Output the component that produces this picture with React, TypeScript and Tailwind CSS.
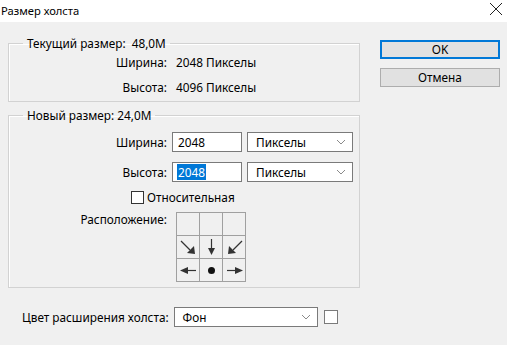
import React from "react";

function Chevron() {
  return (
    <svg width="10" height="6" viewBox="0 0 10 6" className="text-[#8a8a8a]">
      <path d="M1 1 L5 5 L9 1" fill="none" stroke="currentColor" strokeWidth="1" />
    </svg>
  );
}

function Select({ value, width }: { value: string; width: string }) {
  return (
    <div
      className={`${width} h-[20px] bg-white border border-[#7a7a7a] flex items-center justify-between pl-[8px] pr-[6px]`}
    >
      <span>{value}</span>
      <Chevron />
    </div>
  );
}

type Dir = "se" | "s" | "sw" | "w" | "e" | "dot" | "none";

function Cell({ dir }: { dir: Dir }) {
  const ink = "#333333";
  let content: React.ReactNode = null;
  if (dir === "dot") content = <circle cx="11.5" cy="11.5" r="3.5" fill="#111" />;
  if (dir === "s")
    content = (
      <>
        <line x1="11.5" y1="3" x2="11.5" y2="13" stroke={ink} strokeWidth="1.2" />
        <path d="M8 12 L15 12 L11.5 19 Z" fill={ink} />
      </>
    );
  if (dir === "se")
    content = (
      <>
        <line x1="4" y1="5" x2="13" y2="14" stroke={ink} strokeWidth="1.2" />
        <path d="M10 17 L18 18 L17 10 Z" fill={ink} />
      </>
    );
  if (dir === "sw")
    content = (
      <>
        <line x1="19" y1="5" x2="10" y2="14" stroke={ink} strokeWidth="1.2" />
        <path d="M13 17 L5 18 L6 10 Z" fill={ink} />
      </>
    );
  if (dir === "w")
    content = (
      <>
        <line x1="10" y1="11.5" x2="19" y2="11.5" stroke={ink} strokeWidth="1.2" />
        <path d="M11 8 L11 15 L3 11.5 Z" fill={ink} />
      </>
    );
  if (dir === "e")
    content = (
      <>
        <line x1="4" y1="11.5" x2="13" y2="11.5" stroke={ink} strokeWidth="1.2" />
        <path d="M12 8 L12 15 L20 11.5 Z" fill={ink} />
      </>
    );
  return (
    <div className="w-[23px] h-[23px] border-r border-b border-[#a0a0a0]">
      {content && (
        <svg width="23" height="23" viewBox="0 0 23 23">
          {content}
        </svg>
      )}
    </div>
  );
}

export default function App() {
  const anchors: Dir[] = ["none", "none", "none", "se", "s", "sw", "w", "dot", "e"];

  return (
    <div className="w-[507px] h-[345px] bg-[#f0f0f0] text-[11.8px] leading-[16px] text-black font-['Noto_Sans',sans-serif] overflow-hidden">
      {/* Title bar */}
      <div className="h-[22px] bg-white flex items-center justify-between pl-[1px] pr-[4px]">
        <span className="text-[11.2px]">Размер холста</span>
        <svg width="14" height="14" viewBox="0 0 14 14" className="mb-[4px]">
          <path d="M1 1 L13 13 M13 1 L1 13" stroke="#222" strokeWidth="1" />
        </svg>
      </div>

      <div className="flex pt-[13px] pl-[8px]">
        {/* Left column */}
        <div className="w-[352px] flex flex-col">
          <fieldset className="border border-[#d2d2d2] shadow-[inset_1px_1px_0_#fff] pb-[4px]">
            <legend className="ml-[14px] px-[4px] whitespace-pre">Текущий размер:  48,0M</legend>
            <div className="flex items-center h-[20px] mt-[1px]">
              <span className="w-[158px] text-right">Ширина:</span>
              <span className="ml-[9px]">2048 Пикселы</span>
            </div>
            <div className="flex items-center h-[20px] mt-[5px]">
              <span className="w-[158px] text-right">Высота:</span>
              <span className="ml-[9px]">4096 Пикселы</span>
            </div>
          </fieldset>

          <fieldset className="mt-[5px] border border-[#d2d2d2] shadow-[inset_1px_1px_0_#fff] pb-[5px]">
            <legend className="ml-[14px] px-[4px]">Новый размер: 24,0M</legend>
            <div className="flex items-center mt-[9px]">
              <span className="w-[158px] text-right">Ширина:</span>
              <div className="ml-[5px] w-[70px] h-[20px] bg-white border border-[#7a7a7a] flex items-center pl-[5px]">
                2048
              </div>
              <div className="ml-[5px]">
                <Select value="Пикселы" width="w-[106px]" />
              </div>
            </div>
            <div className="flex items-center mt-[10px]">
              <span className="w-[158px] text-right">Высота:</span>
              <div className="ml-[5px] w-[70px] h-[20px] bg-white border border-[#7a7a7a] flex items-center pl-[4px]">
                <span className="bg-[#0078d7] text-white px-[1px]">2048</span>
              </div>
              <div className="ml-[5px]">
                <Select value="Пикселы" width="w-[106px]" />
              </div>
            </div>
            <div className="flex items-center mt-[7px] h-[16px] pl-[122px]">
              <div className="w-[13px] h-[13px] bg-white border border-[#333]" />
              <span className="ml-[3px]">Относительная</span>
            </div>
            <div className="flex items-start mt-[7px]">
              <span className="w-[158px] text-right mt-[-1px]">Расположение:</span>
              <div className="ml-[9px] border-l border-t border-[#a0a0a0] grid grid-cols-3">
                {anchors.map((d, i) => (
                  <Cell key={i} dir={d} />
                ))}
              </div>
            </div>
          </fieldset>

          <div className="flex items-center mt-[19px] pl-[14px]">
            <span>Цвет расширения холста:</span>
            <div className="ml-[5px]">
              <Select value="Фон" width="w-[144px]" />
            </div>
            <div className="ml-[6px] w-[14px] h-[14px] bg-white border border-[#7a7a7a]" />
          </div>
        </div>

        {/* Right column */}
        <div className="ml-[20px] mt-[5px] w-[120px] flex flex-col">
          <button className="h-[19px] bg-[#e1e1e1] border-2 border-[#0078d7] flex items-center justify-center leading-none">
            OK
          </button>
          <button className="mt-[9px] h-[19px] bg-[#e1e1e1] border border-[#adadad] flex items-center justify-center leading-none">
            Отмена
          </button>
        </div>
      </div>
    </div>
  );
}
